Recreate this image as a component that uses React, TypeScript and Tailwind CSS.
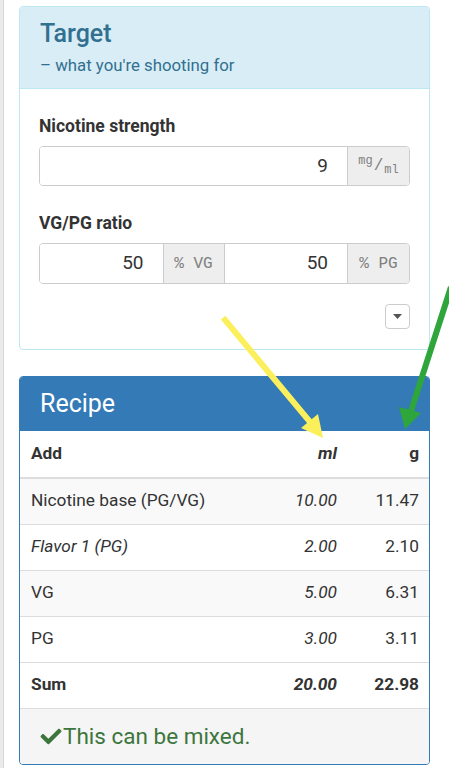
import React from "react";
import { FaCheck } from "react-icons/fa";

const rows = [
  { name: "Nicotine base (PG/VG)", ml: "10.00", g: "11.47", italic: false, striped: true },
  { name: "Flavor 1 (PG)", ml: "2.00", g: "2.10", italic: true, striped: false },
  { name: "VG", ml: "5.00", g: "6.31", italic: false, striped: true },
  { name: "PG", ml: "3.00", g: "3.11", italic: false, striped: false },
];

function Addon({ children, className = "" }: { children: React.ReactNode; className?: string }) {
  return (
    <div
      className={`flex items-center justify-center bg-[#eeeeee] text-[#808080] text-[16px] ${className}`}
      style={{ fontFamily: '"Liberation Mono", "DejaVu Sans Mono", monospace' }}
    >
      {children}
    </div>
  );
}

export default function App() {
  return (
    <div
      className="relative flex min-h-[768px] w-[449px] overflow-hidden bg-white text-[#333]"
      style={{ fontFamily: 'Roboto, "Noto Sans", sans-serif' }}
    >
      <div className="w-[4px] shrink-0 border-r border-[#d6d6d6] bg-[#ebebeb]" />
      <div className="flex w-[411px] flex-col pl-[15px] pt-[6px]">
        {/* Target panel */}
        <section className="w-[411px] rounded-[4px] border border-[#bce8f1] bg-white">
          <header className="rounded-t-[3px] border-b border-[#bce8f1] bg-[#d9edf7] px-[20px] pb-[13px] pt-[13px] text-[#31708f]">
            <h2 className="text-[25px] font-medium leading-[28px]">Target</h2>
            <p className="mt-[7px] text-[16.8px] leading-[20px]">– what you're shooting for</p>
          </header>
          <div className="px-[19px] pb-[20px] pt-[26px]">
            <label className="block text-[17.5px] font-bold leading-[22px]">Nicotine strength</label>
            <div className="mt-[9px] flex h-[40px] overflow-hidden rounded-[4px] border border-[#cccccc]">
              <div className="flex flex-1 items-center justify-end bg-white pr-[19px] text-[19px]">9</div>
              <Addon className="w-[62px] border-l border-[#cccccc]">
                <span className="relative -top-[5px] text-[12px]">mg</span>
                <span className="mx-[1px] text-[16px]">/</span>
                <span className="relative top-[4px] text-[12px]">ml</span>
              </Addon>
            </div>

            <label className="mt-[26px] block text-[17.5px] font-bold leading-[22px]">VG/PG ratio</label>
            <div className="mt-[9px] flex h-[41px] overflow-hidden rounded-[4px] border border-[#cccccc]">
              <div className="flex flex-1 items-center justify-end bg-white pr-[19px] text-[19px]">50</div>
              <Addon className="w-[62px] border-x border-[#cccccc]">% VG</Addon>
              <div className="flex flex-1 items-center justify-end bg-white pr-[19px] text-[19px]">50</div>
              <Addon className="w-[62px] border-l border-[#cccccc]">% PG</Addon>
            </div>

            <div className="mt-[20px] flex justify-end">
              <button className="flex h-[25px] w-[25px] items-center justify-center rounded-[4px] border border-[#cccccc] bg-white">
                <svg width="9" height="5" viewBox="0 0 9 5">
                  <path d="M0 0h9L4.5 5z" fill="#555" />
                </svg>
              </button>
            </div>
          </div>
        </section>

        {/* Recipe panel */}
        <section className="mt-[26px] w-[411px] overflow-hidden rounded-[4px] border border-[#337ab7] bg-white">
          <header className="flex h-[54px] items-center bg-[#337ab7] px-[20px]">
            <h2 className="text-[25px] leading-[28px] text-white">Recipe</h2>
          </header>
          <table className="w-full border-collapse text-[17.3px]">
            <thead>
              <tr className="h-[47px] border-b-2 border-[#dddddd]">
                <th className="pl-[11px] text-left font-bold">Add</th>
                <th className="text-right font-bold italic">ml</th>
                <th className="w-[92px] pr-[10px] text-right font-bold">g</th>
              </tr>
            </thead>
            <tbody>
              {rows.map((r) => (
                <tr
                  key={r.name}
                  className={`h-[46px] border-t border-[#dddddd] ${r.striped ? "bg-[#f9f9f9]" : "bg-white"}`}
                >
                  <td className={`pl-[11px] ${r.italic ? "italic" : ""}`}>{r.name}</td>
                  <td className="text-right italic">{r.ml}</td>
                  <td className="pr-[10px] text-right">{r.g}</td>
                </tr>
              ))}
              <tr className="h-[46px] border-t border-[#dddddd] font-bold">
                <td className="pl-[11px]">Sum</td>
                <td className="text-right italic">20.00</td>
                <td className="pr-[10px] text-right">22.98</td>
              </tr>
            </tbody>
          </table>
          <footer className="flex h-[56px] items-center border-t border-[#dddddd] bg-[#f5f5f5] px-[20px] text-[22.5px] text-[#3c763d]">
            <FaCheck className="mr-[1px] h-[21px] w-[22px]" />
            <span>This can be mixed.</span>
          </footer>
        </section>
      </div>

      {/* annotation arrows */}
      <svg className="pointer-events-none absolute left-0 top-0" width="449" height="768" viewBox="0 0 449 768">
        <line x1="225" y1="320" x2="311" y2="423" stroke="#fbef5c" strokeWidth="6" strokeLinecap="square" />
        <polygon points="323,438 301,428 318,414" fill="#fbef5c" />
        <line x1="450" y1="290" x2="411" y2="411" stroke="#2fa63b" strokeWidth="6" strokeLinecap="square" />
        <polygon points="405,429 399,407 421,413" fill="#2fa63b" />
      </svg>
    </div>
  );
}
